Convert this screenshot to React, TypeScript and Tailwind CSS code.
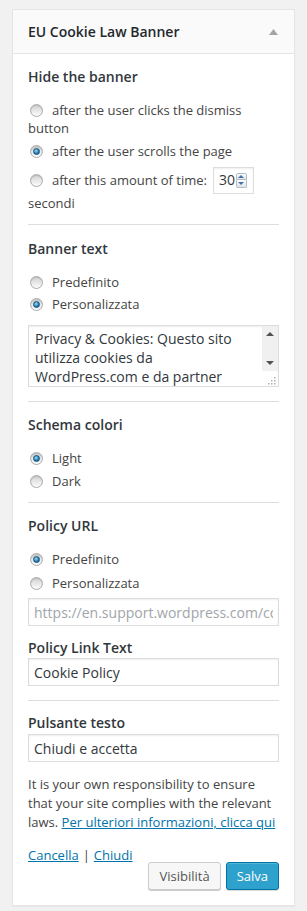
import React from "react";

function Radio({ checked = false }: { checked?: boolean }) {
  return (
    <span className="ml-[2px] mr-[9px] flex h-[13px] w-[13px] shrink-0 items-center justify-center rounded-full border border-[#a9abae] bg-linear-to-b from-[#d2d2d2] to-[#fcfcfc] shadow-[inset_0_1px_1px_rgba(0,0,0,0.12)]">
      {checked && (
        <span className="h-[7px] w-[7px] rounded-full border border-[#17507a] bg-[radial-gradient(circle_at_40%_35%,#9adcfa,#0b6fa6_70%)]" />
      )}
    </span>
  );
}

function RadioRow({
  label,
  checked,
  className = "",
}: {
  label: string;
  checked?: boolean;
  className?: string;
}) {
  return (
    <div className={`flex h-[18px] items-center ${className}`}>
      <Radio checked={checked} />
      <span>{label}</span>
    </div>
  );
}

function Divider({ className = "" }: { className?: string }) {
  return <div className={`h-px bg-[#dddddd] ${className}`} />;
}

function Heading({ children, className = "" }: { children: React.ReactNode; className?: string }) {
  return (
    <div className={`text-[14px] font-semibold text-[#32373c] ${className}`}>
      {children}
    </div>
  );
}

function TextInput({ value, muted = false, className = "" }: { value: string; muted?: boolean; className?: string }) {
  return (
    <input
      readOnly
      defaultValue={value}
      className={[
        "block h-[28px] w-full border border-[#dddddd] bg-white px-[5px] text-[14px] outline-none",
        "shadow-[inset_0_1px_2px_rgba(0,0,0,0.07)]",
        muted ? "text-[#a0a5aa]" : "text-[#32373c]",
        className,
      ].join(" ")}
    />
  );
}

// tiny spinner buttons on the number field
function Spinner() {
  return (
    <div className="ml-[1px] flex h-[15px] w-[11px] flex-col">
      <div className="flex h-[7px] items-center justify-center rounded-t-[2px] border border-[#b6bcc6] bg-linear-to-b from-[#fbfcfd] to-[#dfe5ee]">
        <span className="h-0 w-0 border-x-[3px] border-b-[3px] border-x-transparent border-b-[#4a6ea8]" />
      </div>
      <div className="flex h-[8px] items-center justify-center rounded-b-[2px] border border-t-0 border-[#b6bcc6] bg-linear-to-b from-[#fbfcfd] to-[#dfe5ee]">
        <span className="h-0 w-0 border-x-[3px] border-t-[3px] border-x-transparent border-t-[#4a6ea8]" />
      </div>
    </div>
  );
}

export default function App() {
  return (
    <div className="min-h-[911px] bg-[#f1f1f1] px-[12px] pt-[9px] font-['Open_Sans',sans-serif] text-[13px] text-[#444444]">
      <div className="border border-[#e5e5e5] bg-white shadow-[0_1px_1px_rgba(0,0,0,0.04)]">
        {/* title bar */}
        <div className="flex h-[44px] items-center justify-between border-b border-[#e5e5e5] bg-[#fafafa] pl-[15px] pr-[16px]">
          <h3 className="text-[14px] font-semibold text-[#23282d]">EU Cookie Law Banner</h3>
          <svg width="9" height="6" viewBox="0 0 9 6" aria-hidden>
            <polygon points="4.5,0 9,6 0,6" fill="#a0a5aa" />
          </svg>
        </div>

        <div className="px-[15px] pb-[15px] leading-[18px]">
          {/* Hide the banner */}
          <Heading className="mt-[13px] leading-[20px]">Hide the banner</Heading>
          <RadioRow className="mt-[14px]" label="after the user clicks the dismiss" />
          <div className="h-[18px]">button</div>
          <RadioRow className="mt-[5px]" label="after the user scrolls the page" checked />
          <div className="mt-[6px] flex h-[28px] items-center">
            <Radio />
            <span>after this amount of time:</span>
            <div className="ml-[6px] flex h-[27px] w-[41px] items-center border border-[#dddddd] pl-[5px] shadow-[inset_0_1px_2px_rgba(0,0,0,0.07)]">
              <span className="text-[14px] leading-none text-[#32373c]">30</span>
              <Spinner />
            </div>
          </div>
          <div className="h-[18px]">secondi</div>
          <Divider className="mt-[12px]" />

          {/* Banner text */}
          <Heading className="mt-[14px] leading-[20px]">Banner text</Heading>
          <RadioRow className="mt-[14px]" label="Predefinito" />
          <RadioRow className="mt-[4px]" label="Personalizzata" checked />
          <div className="relative mt-[12px] h-[62px] overflow-hidden border border-[#dddddd] bg-white shadow-[inset_0_1px_2px_rgba(0,0,0,0.07)]">
            <div className="pl-[6px] pr-[20px] pt-[3px] text-[14px] leading-[19px] text-[#32373c]">
              Privacy &amp; Cookies: Questo sito utilizza cookies da WordPress.com e da partner selezionati.
            </div>
            <div className="absolute right-0 top-0 flex h-[45px] w-[16px] flex-col items-center justify-between bg-[#f0f0f0] py-[6px]">
              <span className="h-0 w-0 border-x-[4px] border-b-[4px] border-x-transparent border-b-[#505050]" />
              <span className="h-0 w-0 border-x-[4px] border-t-[4px] border-x-transparent border-t-[#505050]" />
            </div>
            <svg className="absolute bottom-[1px] right-[2px]" width="8" height="8" viewBox="0 0 8 8" aria-hidden>
              <rect x="6" y="0" width="1.5" height="1.5" fill="#b0b0b0" />
              <rect x="3" y="3" width="1.5" height="1.5" fill="#b0b0b0" />
              <rect x="6" y="3" width="1.5" height="1.5" fill="#b0b0b0" />
              <rect x="0" y="6" width="1.5" height="1.5" fill="#b0b0b0" />
              <rect x="3" y="6" width="1.5" height="1.5" fill="#b0b0b0" />
              <rect x="6" y="6" width="1.5" height="1.5" fill="#b0b0b0" />
            </svg>
          </div>
          <Divider className="mt-[14px]" />

          {/* Schema colori */}
          <Heading className="mt-[13px] leading-[20px]">Schema colori</Heading>
          <RadioRow className="mt-[14px]" label="Light" checked />
          <RadioRow className="mt-[5px]" label="Dark" />
          <Divider className="mt-[12px]" />

          {/* Policy URL */}
          <Heading className="mt-[13px] leading-[20px]">Policy URL</Heading>
          <RadioRow className="mt-[14px]" label="Predefinito" checked />
          <RadioRow className="mt-[6px]" label="Personalizzata" />
          <TextInput className="mt-[6px]" value="https://en.support.wordpress.com/cookies/" muted />
          <Heading className="mt-[13px] leading-[18px]">Policy Link Text</Heading>
          <TextInput className="mt-[1px]" value="Cookie Policy" />
          <Divider className="mt-[14px]" />

          {/* Pulsante testo */}
          <Heading className="mt-[13px] leading-[18px]">Pulsante testo</Heading>
          <TextInput className="mt-[2px]" value="Chiudi e accetta" />
          <p className="mt-[13px] leading-[19px]">
            It is your own responsibility to ensure that your site complies with the relevant laws.{" "}
            <a href="#" className="text-[#0073aa] underline">
              Per ulteriori informazioni, clicca qui
            </a>
          </p>

          <div className="mt-[14px] h-[18px]">
            <a href="#" className="text-[#0073aa] underline">Cancella</a>
            <span className="mx-[4px]">|</span>
            <a href="#" className="text-[#0073aa] underline">Chiudi</a>
          </div>
          <div className="-mt-[2px] flex justify-end gap-[5px]">
            <button
              type="button"
              className="h-[28px] rounded-[3px] border border-[#cccccc] bg-[#f7f7f7] px-[10px] text-[13px] text-[#555555] shadow-[0_1px_0_#cccccc]"
            >
              Visibilità
            </button>
            <button
              type="button"
              className="h-[28px] rounded-[3px] border border-[#0074a2] bg-[#2ea2cc] px-[10px] text-[13px] text-white shadow-[inset_0_1px_0_rgba(120,200,230,0.5),0_1px_0_rgba(0,0,0,0.15)]"
            >
              Salva
            </button>
          </div>
        </div>
      </div>
    </div>
  );
}
